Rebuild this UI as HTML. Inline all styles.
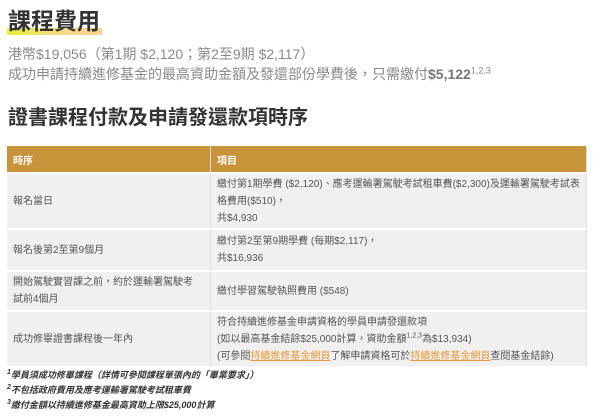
<!DOCTYPE html>
<html><head><meta charset="utf-8"><style>
body{margin:0;background:#fff;font-family:"Liberation Sans","Noto Sans CJK TC",sans-serif;color:#555;width:600px;height:416px;overflow:hidden;position:relative}
.a{position:absolute;white-space:nowrap}
h1{position:absolute;left:7px;top:6px;margin:0;font-size:23px;font-weight:bold;color:#333;line-height:30px;padding:0 2px 0 1px;background:linear-gradient(90deg,#e6ef3a,#f5d98a 60%,#f8d48e) no-repeat 0 22px/100% 7px}
.t{color:#8a8a8a;font-size:14px;left:8px}
h2{position:absolute;left:8px;top:104px;margin:0;font-size:20px;font-weight:bold;color:#333;line-height:28px}
table{position:absolute;left:7px;top:146px;width:580px;border-collapse:collapse;font-size:10px;color:#555}
th{background:#c8943a;color:#fff;text-align:left;font-weight:bold;height:26px;padding:0 6px;border-right:1px solid #ddd}
td{background:#f0f0f0;padding:0 6px;line-height:17px;border-top:2px solid #fff;border-right:1px solid #ddd;vertical-align:middle}
td:first-child{width:180px;padding-right:17px}
a{color:#e89a3c;text-decoration:underline}
.f{font-size:9px;font-style:italic;font-weight:bold;color:#333;left:7px}
sup{font-size:7px;line-height:0}
</style></head><body>
<h1>課程費用</h1>
<div class="a t" style="top:44px">港幣$19,056（第1期 $2,120；第2至9期 $2,117）</div>
<div class="a t" style="top:64px">成功申請持續進修基金的最高資助金額及發還部份學費後，只需繳付<b style="color:#777">$5,122</b><sup style="font-size:9px">1,2,3</sup></div>
<h2>證書課程付款及申請發還款項時序</h2>
<table>
<tr><th>時序</th><th>項目</th></tr>
<tr style="height:56px"><td>報名當日</td><td>繳付第1期學費 ($2,120)、應考運輸署駕駛考試租車費($2,300)及運輸署駕駛考試表格費用($510)，<br>共$4,930</td></tr>
<tr style="height:42px"><td>報名後第2至第9個月</td><td>繳付第2至第9期學費 (每期$2,117)，<br>共$16,936</td></tr>
<tr style="height:40px"><td>開始駕駛實習課之前，約於運輸署駕駛考試前4個月</td><td>繳付學習駕駛執照費用 ($548)</td></tr>
<tr style="height:55px"><td>成功修畢證書課程後一年內</td><td>符合持續進修基金申請資格的學員申請發還款項<br>(如以最高基金結餘$25,000計算，資助金額<sup>1,2,3</sup>為$13,934)<br>(可參閱<a>持續進修基金網頁</a>了解申請資格可於<a>持續進修基金網頁</a>查閱基金結餘)</td></tr>
</table>
<div class="a f" style="top:368px"><sup>1</sup>學員須成功修畢課程（詳情可參閱課程單張內的「畢業要求」）</div>
<div class="a f" style="top:383px"><sup>2</sup>不包括政府費用及應考運輸署駕駛考試租車費</div>
<div class="a f" style="top:398px"><sup>3</sup>繳付金額以持續進修基金最高資助上限$25,000計算</div>
</body></html>
